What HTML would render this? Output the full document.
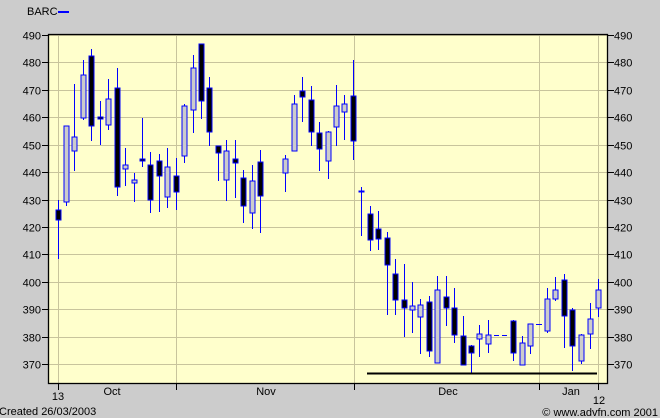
<!DOCTYPE html>
<html><head><meta charset="utf-8"><style>
html,body{margin:0;padding:0;background:#cccccc;}
svg{display:block;font-family:"Liberation Sans",Arial,sans-serif;}
</style></head><body>
<svg id="c" width="660" height="418" viewBox="0 0 660 418" xmlns="http://www.w3.org/2000/svg">
<rect width="660" height="418" fill="#cccccc"/>
<text x="27" y="15" font-size="11" fill="#000">BARC</text>
<line x1="58" y1="12" x2="69" y2="12" stroke="#0000ff" stroke-width="2"/>
<rect x="48" y="34" width="560" height="350" fill="#ffffcc"/>
<g id="grid" stroke="#c8c49c" stroke-width="1"></g>
<g id="cand"></g>
<line x1="367" y1="373.5" x2="597" y2="373.5" stroke="#000" stroke-width="2"/>
<rect x="48.5" y="34.5" width="559" height="349" fill="none" stroke="#000" stroke-width="1.3"/>
<g id="lab" font-size="11" fill="#000"></g>
<text x="58" y="400" font-size="11" text-anchor="middle">13</text>
<text x="112" y="395" font-size="11" text-anchor="middle">Oct</text>
<text x="266" y="395" font-size="11" text-anchor="middle">Nov</text>
<text x="448" y="395" font-size="11" text-anchor="middle">Dec</text>
<text x="571" y="395" font-size="11" text-anchor="middle">Jan</text>
<text x="599" y="404" font-size="11" text-anchor="middle">12</text>
<text x="-1" y="415" font-size="11">Created 26/03/2003</text>
<text x="658" y="416" font-size="11" text-anchor="end">© www.advfn.com 2001</text>
</svg>
<script>
var NS="http://www.w3.org/2000/svg";
function el(p,t,a){var e=document.createElementNS(NS,t);for(var k in a)e.setAttribute(k,a[k]);p.appendChild(e);return e;}
var g=document.getElementById('grid'),lab=document.getElementById('lab'),svg=document.getElementById('c');
for(var v=370;v<=490;v+=10){var y=Math.round(35+(490-v)*2.742)+0.5;
el(g,'line',{x1:48,x2:608,y1:y,y2:y});
el(svg,'line',{x1:42,x2:48,y1:y,y2:y,stroke:'#000'});
el(svg,'line',{x1:608,x2:614,y1:y,y2:y,stroke:'#000'});
var t=el(lab,'text',{x:41,y:y+4,'text-anchor':'end'});t.textContent=v;
t=el(lab,'text',{x:614,y:y+4});t.textContent=v;}
[58,176,354,539,598].forEach(function(x){el(g,'line',{x1:x+.5,x2:x+.5,y1:34,y2:384});el(svg,'line',{x1:x+.5,x2:x+.5,y1:384,y2:390,stroke:'#000'});});
var C=[[58,200,259,210,220,1],[66,126,206,126,202,0],[74,84,171,137,151,0],[83,60,120,75,118,0],[91,49,141,56,126,1],[100,101,145,117,119,1],[108,79,130,99,125,0],[117,68,196,88,187,1],[125,148,186,165,169,0],[134,173,202,180,183,0],[142,118,167,159,161,1],[150,152,213,165,200,1],[159,154,212,161,176,1],[167,148,208,167,197,0],[176,158,210,176,192,1],[184,104,163,106,156,0],[193,55,133,68,110,0],[201,44,119,44,101,1],[209,77,146,88,132,1],[218,146,181,146,153,1],[226,140,201,151,180,0],[235,140,198,159,163,1],[243,170,223,178,206,1],[252,165,229,181,213,0],[260,150,233,162,196,1],[285,155,192,159,173,0],[294,95,151,104,151,0],[302,77,122,91,97,1],[311,86,146,100,132,1],[319,122,171,133,149,1],[328,131,179,132,161,0],[336,85,146,106,127,0],[344,95,140,104,112,0],[353,60,160,96,141,1],[361,187,236,191,192,1],[370,206,251,214,240,1],[378,211,250,229,239,1],[387,232,315,238,265,1],[395,259,315,274,300,1],[404,264,337,300,308,1],[412,282,333,306,310,0],[420,299,354,305,317,0],[429,296,357,302,351,1],[437,276,363,290,363,0],[446,276,326,297,308,1],[454,288,343,308,335,1],[463,316,365,336,365,1],[471,345,373,346,353,1],[479,325,357,334,339,0],[488,320,353,335,344,0],[513,320,361,321,353,1],[522,336,365,343,365,0],[530,324,354,324,346,0],[547,288,333,299,331,0],[555,277,301,290,299,0],[564,274,348,280,316,1],[572,308,371,310,346,1],[581,334,364,335,361,0],[590,303,349,319,334,0],[598,279,317,290,308,0]];
var cg=document.getElementById('cand');
C.forEach(function(c){var x=c[0]+.5;
el(cg,'line',{x1:x,x2:x,y1:c[1],y2:c[2],stroke:'#0000ff','stroke-width':1});
el(cg,'rect',{x:c[0]-2,y:c[3],width:5,height:Math.max(1,c[4]-c[3]),fill:c[5]?'#000':'#cccccc',stroke:'#0000ff','stroke-width':1});});
el(cg,'line',{x1:494,x2:508,y1:335.5,y2:335.5,stroke:'#0000ff','stroke-dasharray':'5,3'});
el(cg,'line',{x1:536,x2:542,y1:324.5,y2:324.5,stroke:'#0000ff'});
</script>
</body></html>
